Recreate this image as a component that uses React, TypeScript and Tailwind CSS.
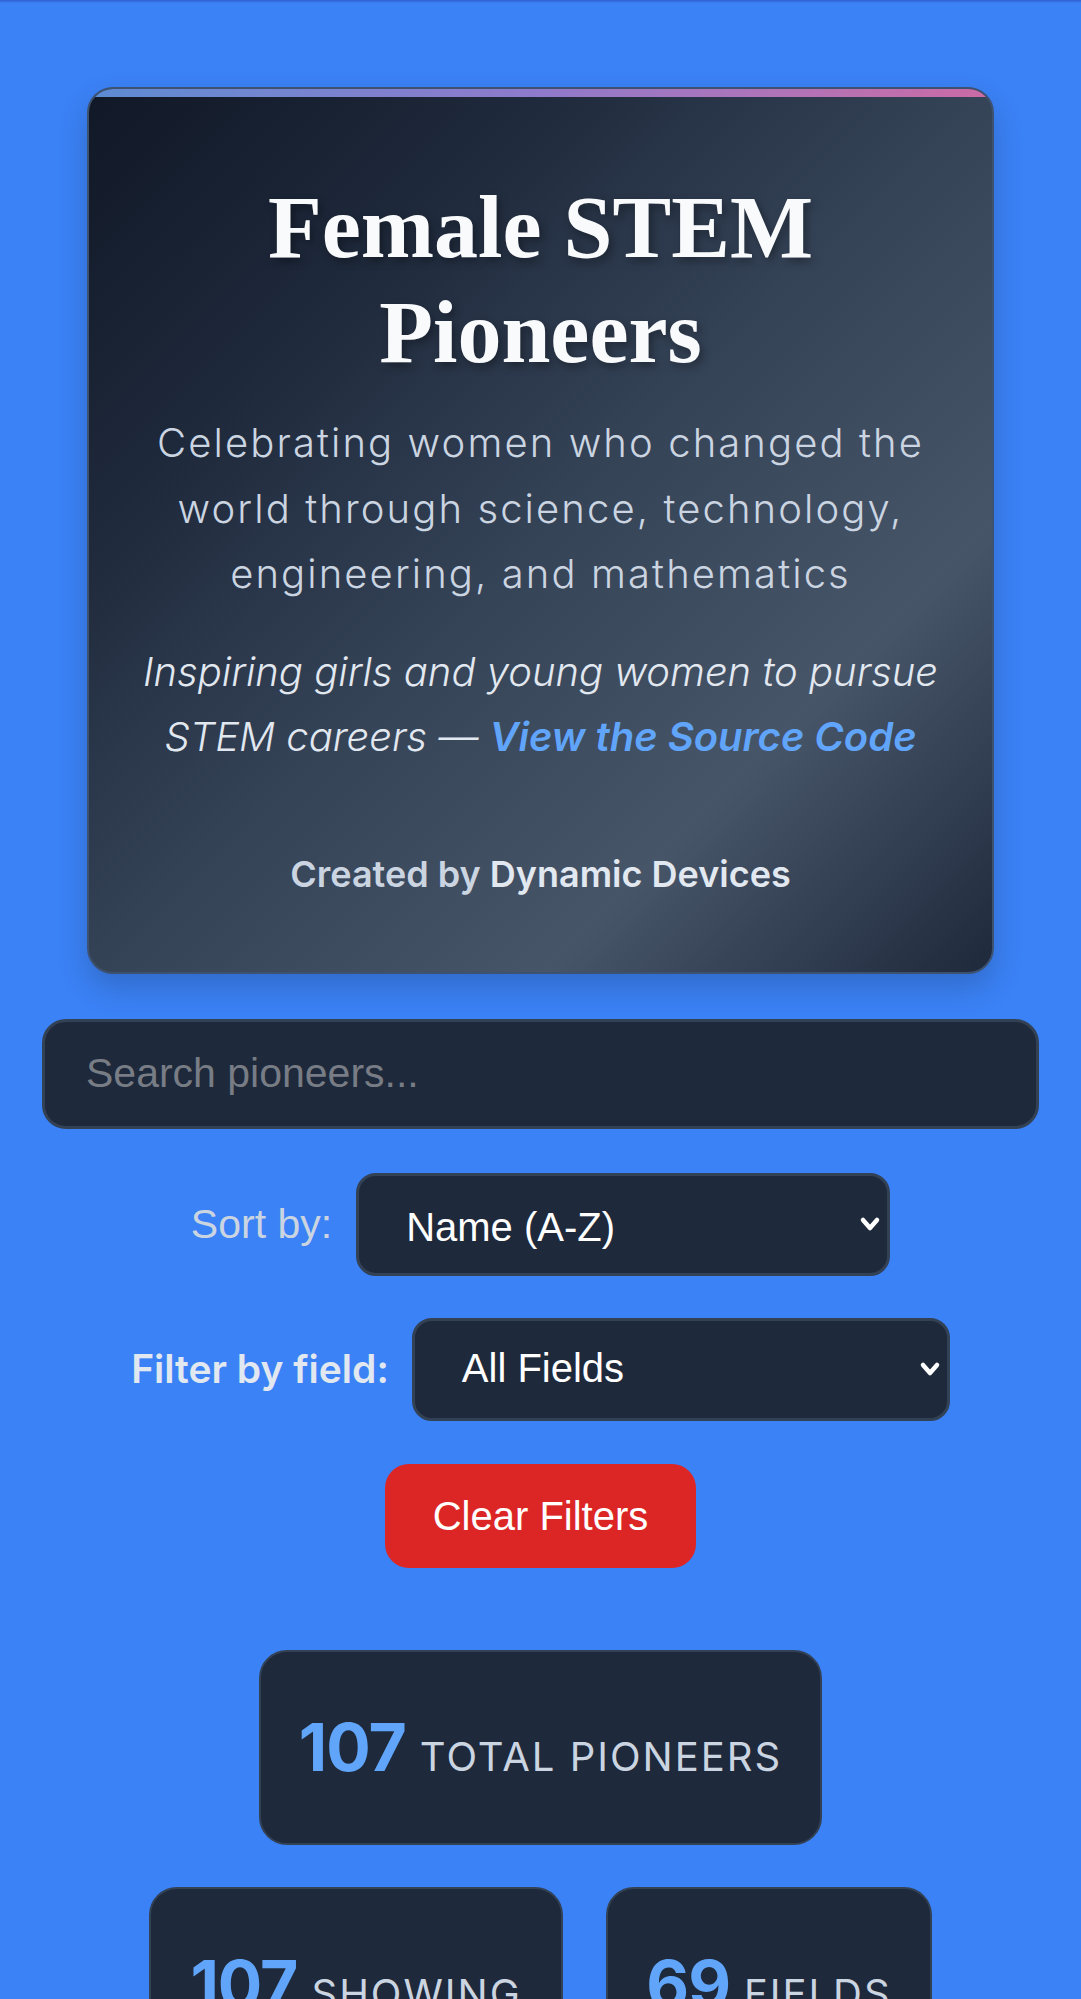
import React from "react";

const inter = { fontFamily: "Inter, 'Noto Sans', sans-serif" };

function Chevron() {
  return (
    <svg width="22" height="18" viewBox="0 0 22 18" className="absolute right-[6px] top-1/2 -translate-y-1/2 pointer-events-none">
      <path d="M4 5 L11 13 L18 5" fill="none" stroke="white" strokeWidth="4.5" strokeLinecap="round" strokeLinejoin="round" />
    </svg>
  );
}

function Stat({ n, label, w }: { n: string; label: string; w: string }) {
  return (
    <div className={`${w} h-[195px] rounded-[28px] border-2 border-[#334155] bg-[#1e293b] px-[40px] flex items-center justify-center`}>
      <div className="flex items-baseline gap-[14px] font-['Inter'] whitespace-nowrap">
        <span className="text-[66px] font-bold leading-none text-[#60a5fa] tracking-[-1px]">{n}</span>
        <span className="text-[40px] font-normal leading-none text-[#cbd5e1] tracking-[2px] uppercase">{label}</span>
      </div>
    </div>
  );
}

export default function App() {
  return (
    <div className="min-h-[1999px] w-full bg-[#3b82f6] relative overflow-hidden" style={inter}>
      <div className="absolute top-0 left-0 right-0 h-[3px] bg-gradient-to-b from-[#2f5fcf] to-transparent" />
      <div className="flex flex-col items-center pt-[87px]">
        {/* Hero card */}
        <div className="relative w-[907px] rounded-[26px] border-2 border-[#3d5170] overflow-hidden shadow-[0_14px_30px_rgba(0,0,0,0.18)] bg-[linear-gradient(135deg,#111827_0%,#1e293b_25%,#354357_50%,#475569_75%,#1e293b_100%)]">
          <div className="h-[8px] w-full bg-gradient-to-r from-[#5b8cd3] via-[#8f7acb] to-[#cb6aa5]" />
          <div className="flex flex-col items-center px-[42px] pt-[78px] pb-[78px] text-center">
            <h1 className="font-['Liberation_Serif'] font-bold text-[88px] leading-[105px] text-[#f8fafc] [text-shadow:3px_4px_8px_rgba(0,0,0,0.35)]">
              Female STEM Pioneers
            </h1>
            <p className="mt-[25px] text-[40px] leading-[65.6px] font-light text-[#cbd5e1] tracking-[2.1px] max-w-[820px] font-['Inter']">
              Celebrating women who changed the world through science, technology, engineering, and mathematics
            </p>
            <p className="mt-[32px] text-[40px] leading-[65px] italic font-light text-[#e2e8f0] max-w-[820px] font-['Inter']">
              Inspiring girls and young women to pursue STEM careers —{" "}
              <a className="text-[#60a5fa] font-semibold">View the Source Code</a>
            </p>
            <p className="mt-[85px] text-[36px] leading-[40px] font-semibold text-[#cbd5e1] font-['Inter']">
              Created by <span className="text-[#e2e8f0]">Dynamic Devices</span>
            </p>
          </div>
        </div>

        {/* Search */}
        <div className="mt-[45px] w-[997px] h-[110px] rounded-[24px] border-[3px] border-[#334155] bg-[#1e293b] flex items-center px-[41px]">
          <span className="font-['Liberation_Sans'] text-[41px] text-[#777c85]">Search pioneers...</span>
        </div>

        {/* Sort */}
        <div className="mt-[44px] flex items-center gap-[24px]">
          <span className="font-['Liberation_Sans'] text-[41px] text-[#cbd5e1]">Sort by:</span>
          <div className="relative w-[534px] h-[103px] rounded-[20px] border-[3px] border-[#334155] bg-[#1e293b] flex items-center pl-[47px] pt-[6px]">
            <span className="font-['Liberation_Sans'] text-[40px] text-white">Name (A-Z)</span>
            <Chevron />
          </div>
        </div>

        {/* Filter */}
        <div className="mt-[42px] flex items-center gap-[23px]">
          <span className="font-['Inter'] font-semibold text-[39px] text-[#e2e8f0]">Filter by field:</span>
          <div className="relative w-[538px] h-[103px] rounded-[20px] border-[3px] border-[#334155] bg-[#1e293b] flex items-center pl-[47px] pb-[2px]">
            <span className="font-['Liberation_Sans'] text-[40px] text-white">All Fields</span>
            <Chevron />
          </div>
        </div>

        {/* Clear */}
        <button className="mt-[43px] w-[311px] h-[104px] rounded-[24px] bg-[#dc2626] font-['Liberation_Sans'] text-[40px] text-white">
          Clear Filters
        </button>

        {/* Stats */}
        <div className="mt-[82px]">
          <Stat n="107" label="Total Pioneers" w="w-[563px]" />
        </div>
        <div className="mt-[42px] flex gap-[43px]">
          <Stat n="107" label="Showing" w="w-[414px]" />
          <Stat n="69" label="Fields" w="w-[326px]" />
        </div>
      </div>
    </div>
  );
}
